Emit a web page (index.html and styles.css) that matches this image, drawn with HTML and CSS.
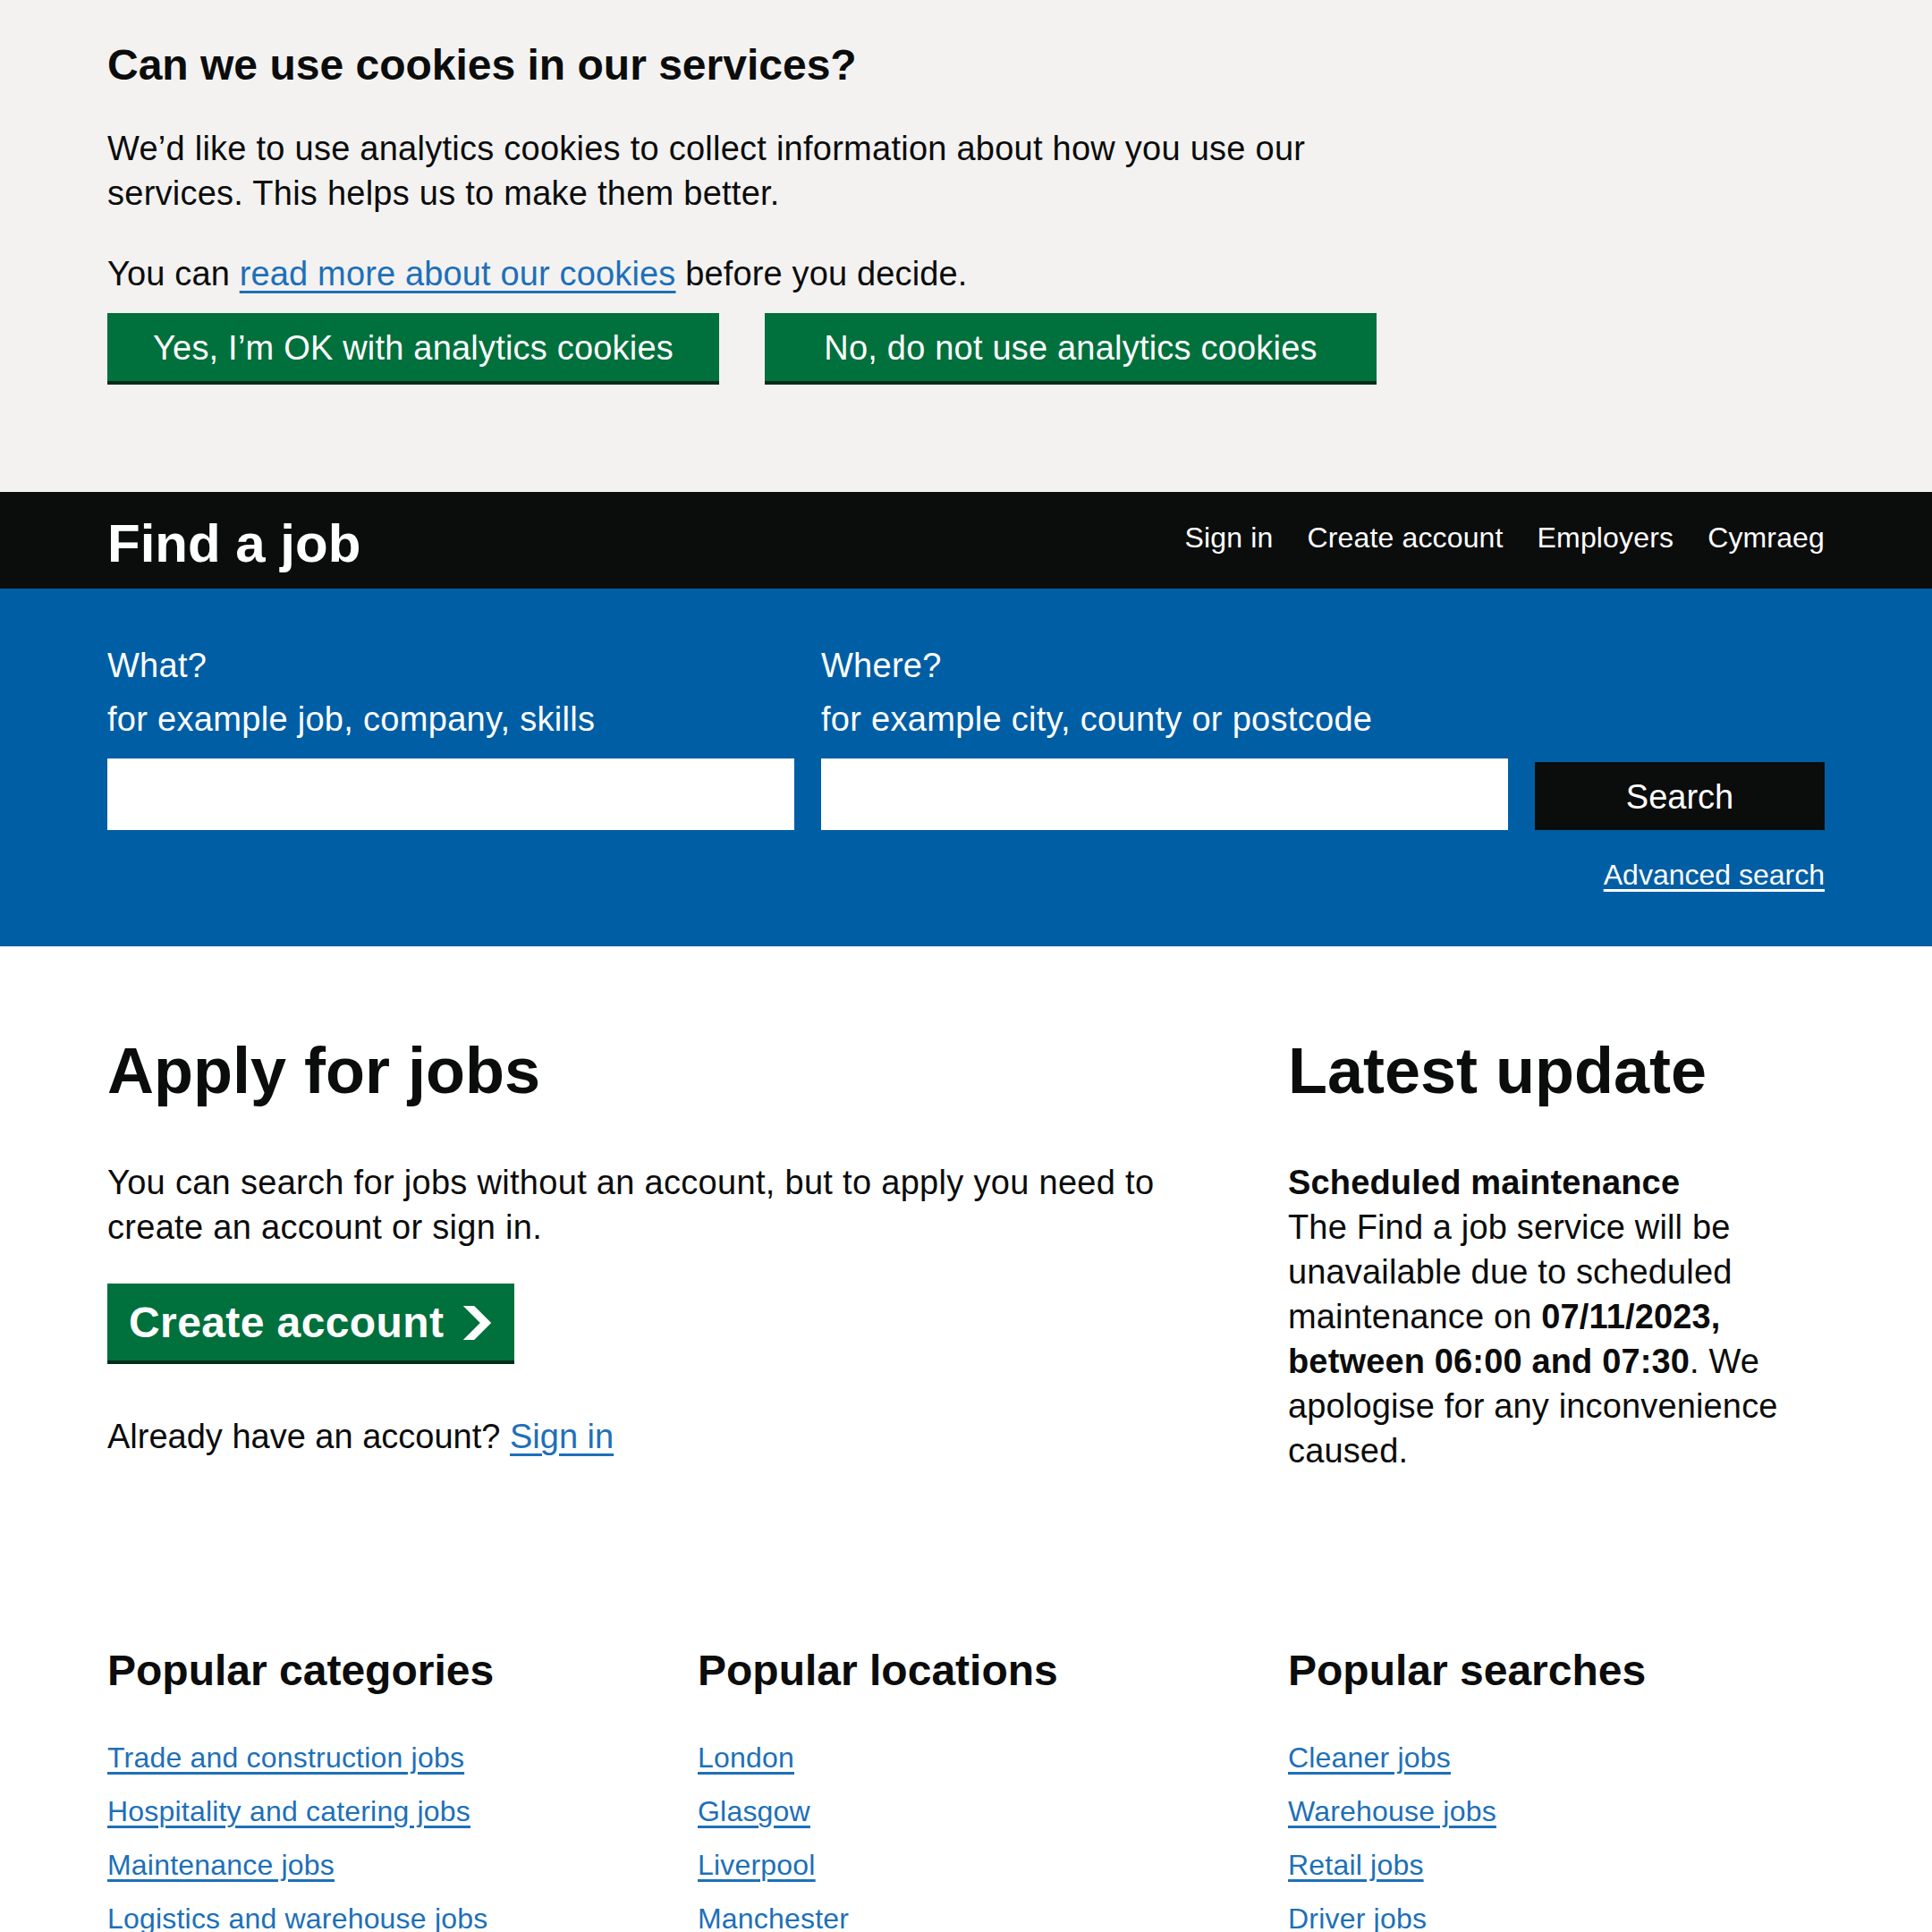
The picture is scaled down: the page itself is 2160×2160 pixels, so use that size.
FILE: index.html
```html
<!DOCTYPE html>
<html lang="en">
<head>
<meta charset="utf-8">
<title>Find a job - GOV.UK</title>
<link rel="stylesheet" href="styles.css">
</head>
<body>
<div class="cookie-banner">
  <div class="container">
    <div class="cookie-content">
      <h2 class="cookie-title">Can we use cookies in our services?</h2>
      <p class="cookie-text">We’d like to use analytics cookies to collect information about how you use our services. This helps us to make them better.</p>
      <p class="cookie-text cookie-text-last">You can <a class="link" href="#">read more about our cookies</a> before you decide.</p>
      <div class="button-group">
        <button class="button cookie-button" type="button">Yes, I’m OK with analytics cookies</button>
        <button class="button cookie-button" type="button">No, do not use analytics cookies</button>
      </div>
    </div>
  </div>
</div>

<header class="header">
  <div class="container header-inner">
    <a class="logo" href="#">Find a job</a>
    <nav class="nav">
      <a class="nav-link" href="#">Sign in</a>
      <a class="nav-link" href="#">Create account</a>
      <a class="nav-link" href="#">Employers</a>
      <a class="nav-link" href="#">Cymraeg</a>
    </nav>
  </div>
</header>

<section class="search">
  <div class="container">
    <form class="search-grid">
      <div class="field">
        <label class="label" for="what">What?</label>
        <div class="hint">for example job, company, skills</div>
        <input class="input" id="what" type="text">
      </div>
      <div class="field">
        <label class="label" for="where">Where?</label>
        <div class="hint">for example city, county or postcode</div>
        <input class="input" id="where" type="text">
      </div>
      <div class="search-action">
        <button class="search-button" type="button">Search</button>
      </div>
    </form>
    <div class="advanced">
      <a class="advanced-link" href="#">Advanced search</a>
    </div>
  </div>
</section>

<main class="container main">
  <div class="grid">
    <div class="col-two-thirds">
      <h1 class="heading-l">Apply for jobs</h1>
      <p class="body apply-text">You can search for jobs without an account, but to apply you need to create an account or sign in.</p>
      <a class="start-button" href="#">Create account<svg class="start-icon" width="35" height="38" viewBox="0 0 33 40" aria-hidden="true"><path fill="currentColor" d="M0 0h13l20 20-20 20H0l20-20z"/></svg></a>
      <p class="body already">Already have an account? <a class="link" href="#">Sign in</a></p>
    </div>
    <div class="col-one-third">
      <h2 class="heading-l">Latest update</h2>
      <p class="body update-text"><strong>Scheduled maintenance</strong><br>The Find a job service will be unavailable due to scheduled maintenance on <strong>07/11/2023,</strong> <strong>between 06:00 and 07:30</strong>. We apologise for any inconvenience caused.</p>
    </div>
  </div>

  <div class="grid popular">
    <div>
      <h2 class="heading-m">Popular categories</h2>
      <ul class="list">
        <li><a class="link" href="#">Trade and construction jobs</a></li>
        <li><a class="link" href="#">Hospitality and catering jobs</a></li>
        <li><a class="link" href="#">Maintenance jobs</a></li>
        <li><a class="link" href="#">Logistics and warehouse jobs</a></li>
      </ul>
    </div>
    <div>
      <h2 class="heading-m">Popular locations</h2>
      <ul class="list">
        <li><a class="link" href="#">London</a></li>
        <li><a class="link" href="#">Glasgow</a></li>
        <li><a class="link" href="#">Liverpool</a></li>
        <li><a class="link" href="#">Manchester</a></li>
      </ul>
    </div>
    <div>
      <h2 class="heading-m">Popular searches</h2>
      <ul class="list">
        <li><a class="link" href="#">Cleaner jobs</a></li>
        <li><a class="link" href="#">Warehouse jobs</a></li>
        <li><a class="link" href="#">Retail jobs</a></li>
        <li><a class="link" href="#">Driver jobs</a></li>
      </ul>
    </div>
  </div>
</main>
</body>
</html>
```
FILE: styles.css
```css
* { box-sizing: border-box; }

html, body {
  margin: 0;
  padding: 0;
  background: #ffffff;
  color: #0b0c0c;
  font-family: "Liberation Sans", Arial, Helvetica, sans-serif;
  font-size: 38px;
  line-height: 50px;
}

.container {
  width: 1920px;
  margin: 0 auto;
}

.link {
  color: #1d70b8;
  text-decoration: underline;
  text-decoration-thickness: 3px;
  text-underline-offset: 0.1578em;
}

/* Cookie banner */
.cookie-banner {
  background: #f3f2f1;
  padding: 43px 0 124px;
}

.cookie-content {
  max-width: 1425px;
}

.cookie-title {
  margin: 0 0 38px;
  font-size: 48px;
  line-height: 60px;
  font-weight: 700;
}

.cookie-text {
  margin: 0 0 40px;
  letter-spacing: 0.25px;
}

.cookie-text-last {
  margin-bottom: 19px;
  letter-spacing: 0.15px;
}

.button-group {
  display: flex;
  gap: 51px;
}

.button {
  margin: 0;
  font-family: "Liberation Sans", Arial, Helvetica, sans-serif;
  font-size: 38px;
  line-height: 38px;
  font-weight: 400;
  letter-spacing: 0.2px;
  color: #ffffff;
  background: #00703c;
  border: 4px solid transparent;
  border-radius: 0;
  box-shadow: 0 4px 0 #002d18;
  padding: 16px 20px 14px;
  text-align: center;
  cursor: pointer;
}

.cookie-button {
  width: 684px;
}

/* Header */
.header {
  background: #0b0c0c;
}

.header-inner {
  display: flex;
  justify-content: space-between;
  align-items: flex-start;
  padding: 28px 0 20px;
}

.logo {
  color: #ffffff;
  text-decoration: none;
  font-size: 60px;
  line-height: 60px;
  font-weight: 700;
}

.nav {
  display: flex;
  gap: 38px;
  margin-top: 3px;
}

.nav-link {
  color: #ffffff;
  text-decoration: none;
  font-size: 32px;
  line-height: 40px;
  letter-spacing: 0.15px;
}

/* Search */
.search {
  background: #005ea5;
  color: #ffffff;
  padding: 61px 0 60px;
}

.search-grid {
  margin: 0;
  display: grid;
  grid-template-columns: 768px 768px 324px;
  column-gap: 30px;
  align-items: end;
}

.field {
  display: flex;
  flex-direction: column;
}

.label {
  display: block;
  font-size: 38px;
  line-height: 50px;
  margin-bottom: 10px;
  letter-spacing: 0.25px;
}

.hint {
  font-size: 38px;
  line-height: 50px;
  margin-bottom: 19px;
  letter-spacing: 0.3px;
}

.input {
  display: block;
  width: 100%;
  height: 80px;
  border: 0;
  border-radius: 0;
  padding: 10px;
  font-family: "Liberation Sans", Arial, Helvetica, sans-serif;
  font-size: 38px;
  background: #ffffff;
}

.search-action {
  display: flex;
}

.search-button {
  width: 324px;
  height: 76px;
  margin: 0;
  padding: 16px 20px 14px;
  border: 4px solid transparent;
  background: #0b0c0c;
  color: #ffffff;
  font-family: "Liberation Sans", Arial, Helvetica, sans-serif;
  font-size: 38px;
  line-height: 38px;
  cursor: pointer;
}

.advanced {
  margin-top: 28px;
  text-align: right;
  line-height: 40px;
}

.advanced-link {
  color: #ffffff;
  font-size: 32px;
  line-height: 40px;
  text-decoration: underline;
  text-decoration-thickness: 3px;
  text-underline-offset: 0.1578em;
}

/* Main */
.main {
  padding-top: 99px;
}

.grid {
  display: grid;
  grid-template-columns: repeat(3, 1fr);
  column-gap: 60px;
}

.col-two-thirds {
  grid-column: span 2;
}

.col-one-third {
  grid-column: span 1;
}

.heading-l {
  margin: 0 0 60px;
  font-size: 72px;
  line-height: 80px;
  font-weight: 700;
}

.heading-m {
  margin: 0 0 47px;
  font-size: 48px;
  line-height: 60px;
  font-weight: 700;
}

.body {
  margin: 0;
  font-size: 38px;
  line-height: 50px;
  letter-spacing: 0.3px;
}

.update-text {
  letter-spacing: 0.15px;
}

.apply-text {
  margin-bottom: 38px;
}

.start-button {
  display: flex;
  align-items: center;
  width: fit-content;
  height: 86px;
  padding: 16px 20px 14px;
  border: 4px solid transparent;
  background: #00703c;
  box-shadow: 0 4px 0 #002d18;
  color: #ffffff;
  text-decoration: none;
  font-size: 48px;
  line-height: 48px;
  font-weight: 700;
  letter-spacing: 0.4px;
}

.start-icon {
  margin-left: 20px;
  flex-shrink: 0;
}

.already {
  margin-top: 60px;
  letter-spacing: 0;
}

/* Popular */
.popular {
  margin-top: 191px;
}

.list {
  list-style: none;
  margin: 0;
  padding: 0;
}

.list li {
  font-size: 32px;
  line-height: 40px;
  margin-bottom: 20px;
  letter-spacing: 0.2px;
}
```
